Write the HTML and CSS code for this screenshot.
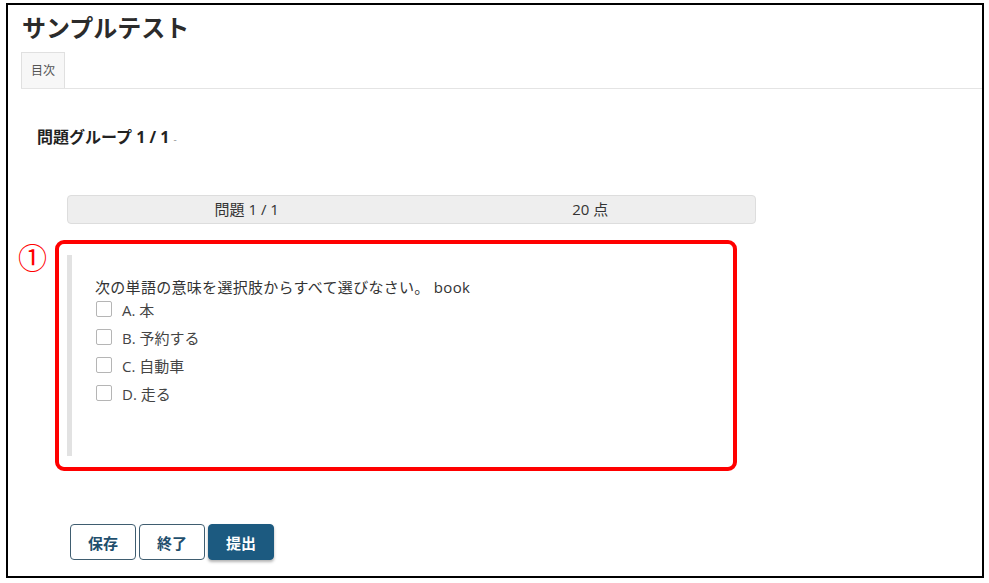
FILE: index.html
```html
<!DOCTYPE html>
<html lang="ja">

<head>
    <meta charset="UTF-8">
    <meta name="viewport" content="width=device-width, initial-scale=1.0">
    <title>サンプルテスト</title>
    <link rel="stylesheet" href="styles.css">
</head>

<body>
    <div class="frame">
        <h1 class="test-title">サンプルテスト</h1>

        <!-- Tabs -->
        <div class="tabs">
            <span class="tab">目次</span>
        </div>

        <h2 class="group-title">問題グループ 1 / 1 <span class="dash">-</span></h2>

        <div class="question-bar">
            <span>問題 1 / 1</span>
            <span>20 点</span>
        </div>

        <!-- Question -->
        <div class="highlight">
            <span class="mark">①</span>
            <div class="question">
                <p class="question-text">次の単語の意味を選択肢からすべて選びなさい。 book</p>
                <ul class="choices">
                    <li><span class="box"></span>A. 本</li>
                    <li><span class="box"></span>B. 予約する</li>
                    <li><span class="box"></span>C. 自動車</li>
                    <li><span class="box"></span>D. 走る</li>
                </ul>
            </div>
        </div>

        <div class="actions">
            <button class="btn">保存</button>
            <button class="btn">終了</button>
            <button class="btn btn-primary">提出</button>
        </div>
    </div>
</body>

</html>
```

FILE: styles.css
```css
body {
    font-family: "Open Sans", "Noto Sans CJK JP", sans-serif;
    margin: 0;
    background: #fff;
    color: #333;
}

.frame {
    box-sizing: border-box;
    width: 978px;
    height: 575px;
    margin: 3px 0 0 6px;
    border: 2px solid #000;
}

.test-title {
    margin: 0;
    padding: 7px 0 0 14px;
    font-size: 24px;
    line-height: 32px;
    font-weight: 700;
    color: #2b2b2b;
}

.tabs {
    display: flex;
    margin: 8px 0 0 13px;
    border-bottom: 1px solid #e4e4e4;
}

.tab {
    height: 36px;
    padding: 0 9px;
    font-size: 12px;
    line-height: 36px;
    color: #555;
    background: #f7f7f7;
    border: 1px solid #e0e0e0;
    border-bottom: none;
    box-sizing: border-box;
}

.group-title {
    margin: 36px 0 0 29px;
    font-size: 16px;
    line-height: 24px;
    font-weight: 700;
    color: #222;
}

.group-title .dash {
    font-size: 10px;
    font-weight: 400;
    color: #999;
}

.question-bar {
    box-sizing: border-box;
    display: grid;
    grid-template-columns: 1fr 1fr;
    width: 689px;
    height: 29px;
    margin: 44px 0 0 59px;
    background: #eee;
    border: 1px solid #ddd;
    border-radius: 4px;
    font-size: 15px;
    line-height: 27px;
    text-align: center;
    color: #333;
}

.question-bar span {
    padding-left: 14px;
}

.highlight {
    position: relative;
    box-sizing: border-box;
    width: 682px;
    height: 231px;
    margin: 16px 0 0 47px;
    padding: 11px 8px;
    border: 4px solid #f00;
    border-radius: 9px;
}

.mark {
    position: absolute;
    left: -41px;
    top: 0;
    font-family: "Liberation Serif", "Noto Sans CJK JP", serif;
    font-size: 29px;
    line-height: 30px;
    color: #f00;
}

.question {
    height: 100%;
    box-sizing: border-box;
    padding: 22px 0 0 23px;
    border-left: 5px solid #e2e2e2;
}

.question-text {
    margin: 0;
    font-size: 15px;
    line-height: 20px;
    letter-spacing: 0.3px;
    color: #333;
}

.choices {
    list-style: none;
    margin: -2px 0 0;
    padding: 0;
}

.choices li {
    display: flex;
    align-items: center;
    height: 28px;
    font-size: 15px;
    color: #444;
}

.box {
    box-sizing: border-box;
    width: 16px;
    height: 16px;
    margin: 0 10px 0 1px;
    border: 1px solid #b5b5b5;
    border-radius: 2px;
    background: #fff;
}

.actions {
    display: flex;
    gap: 3px;
    margin: 53px 0 0 62px;
}

.btn {
    box-sizing: border-box;
    width: 66px;
    height: 36px;
    padding: 0;
    font-family: "Open Sans", "Noto Sans CJK JP", sans-serif;
    font-size: 15px;
    font-weight: 700;
    color: #1f4f6d;
    background: #fff;
    border: 1.5px solid #3f5d70;
    border-radius: 4px;
    cursor: pointer;
}

.btn-primary {
    color: #fff;
    background: #1c5a80;
    border-color: #1c5a80;
    box-shadow: 0 2px 3px rgba(0, 0, 0, 0.3);
}
```
